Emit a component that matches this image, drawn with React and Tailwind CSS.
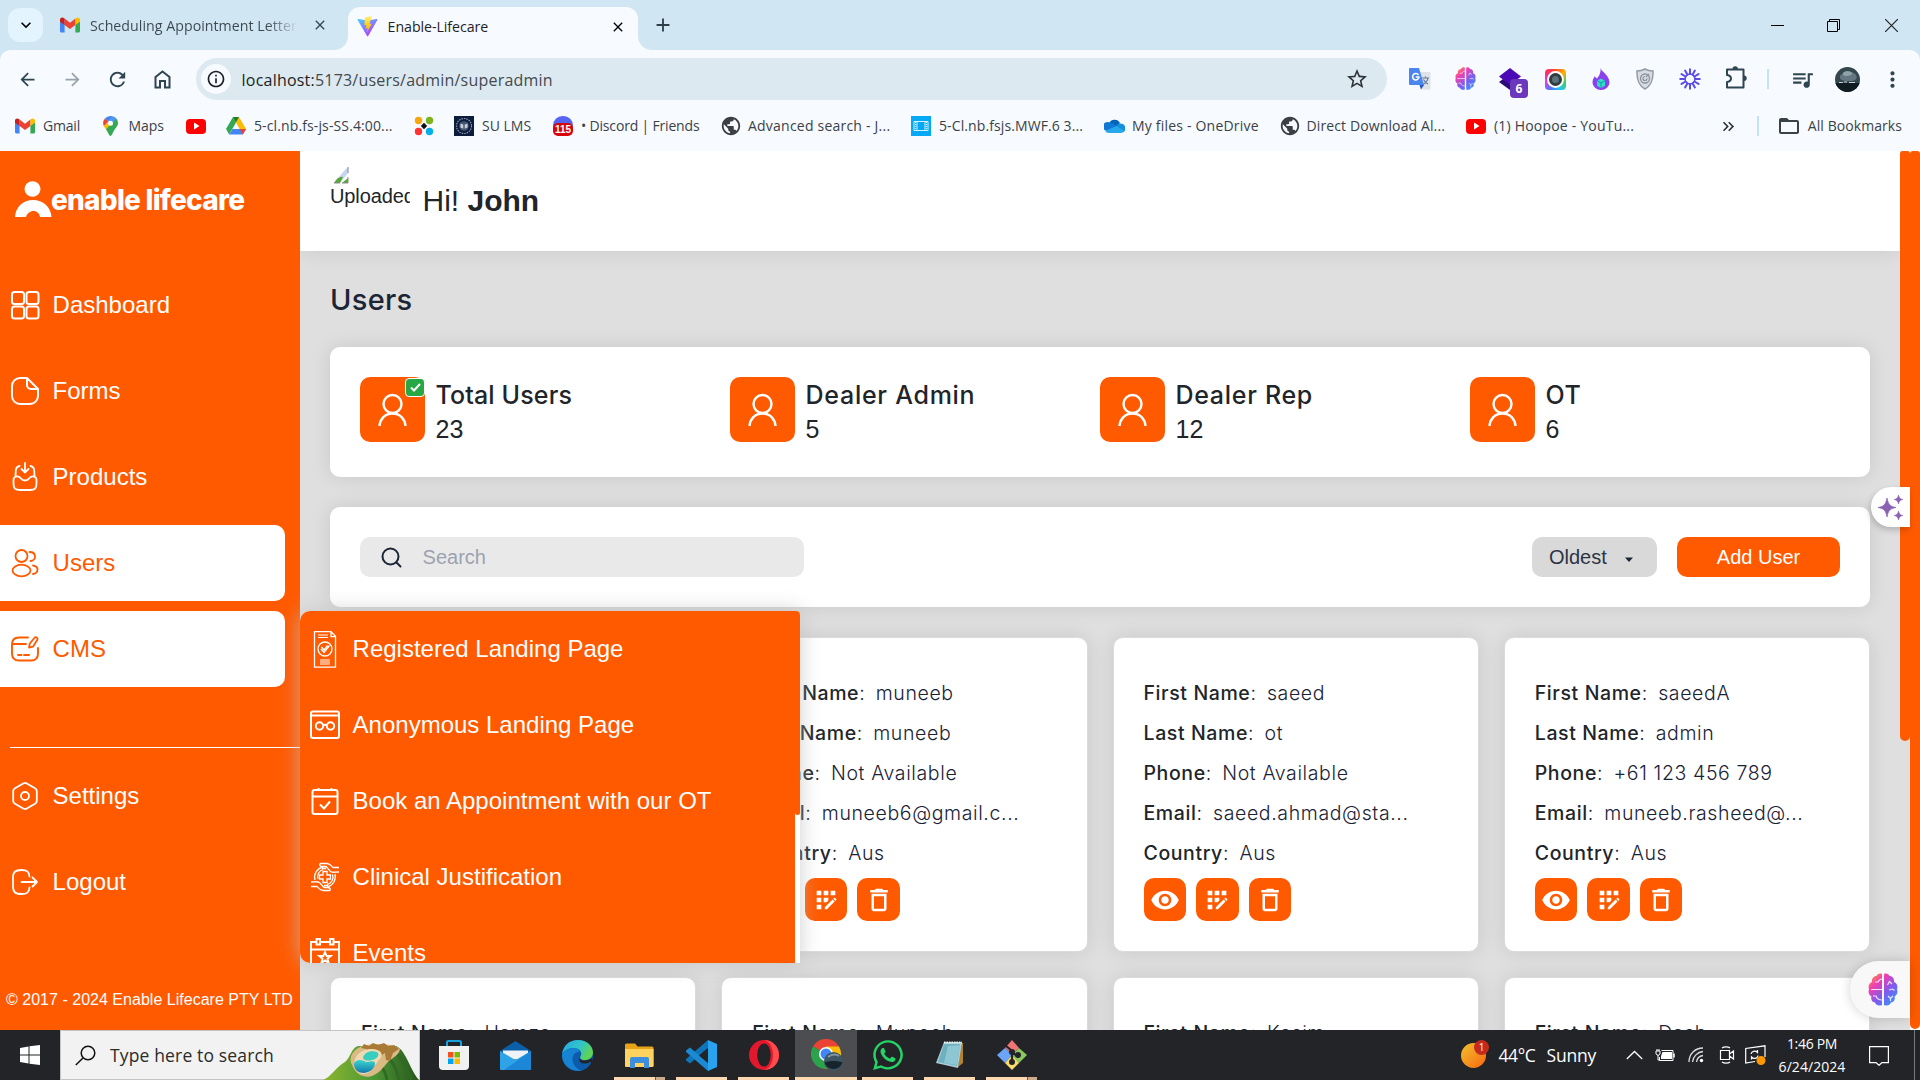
import React from "react";
import {
  MdQueueMusic, MdStarBorder, MdInfoOutline, MdPublic, MdFolderOpen,
  MdAppRegistration, MdRemoveRedEye, MdDeleteOutline, MdArrowBack, MdArrowForward, MdRefresh,
  MdAdd, MdClose, MdMoreVert, MdKeyboardDoubleArrowRight, MdKeyboardArrowDown, MdPlayArrow,
} from "react-icons/md";
import { FaWhatsapp } from "react-icons/fa";

const Svg = ({ w = 24, h, box, children, className = "" }) => (
  <svg width={w} height={h || w} viewBox={box || "0 0 24 24"} fill="none" className={"shrink-0 " + className}>
    {children}
  </svg>
);

/* ---------- brand marks ---------- */

const Gmail = () => (
  <Svg w={20} h={16} box="0 0 20 16">
    <path d="M0 3v11a1.6 1.6 0 0 0 1.6 1.6h3V7z" fill="#4285f4" />
    <path d="M20 3v11a1.6 1.6 0 0 1-1.6 1.6h-3V7z" fill="#34a853" />
    <path d="M4.6 1.6V8L10 12l5.400-4V1.600L10 5.700z" fill="#ea4335" />
    <path d="M0 2.600V4.700L4.600 8V1.500l-.8-.6C2.200-.3 0 .7 0 2.600z" fill="#c5221f" />
    <path d="M20 2.600V4.700L15.400 8V1.500l.8-.6C17.800-.3 20 .7 20 2.600z" fill="#fbbc04" />
  </Svg>
);

const Vite = () => (
  <Svg w={21} box="0 0 32 32">
    <defs>
      <linearGradient id="vt" x1="0" y1="0" x2="0.7" y2="1"><stop stopColor="#41d1ff" /><stop offset="1" stopColor="#bd34fe" /></linearGradient>
      <linearGradient id="vy" x1="0" y1="0" x2="0" y2="1"><stop stopColor="#ffea83" /><stop offset=".3" stopColor="#ffdd35" /><stop offset="1" stopColor="#ffa800" /></linearGradient>
    </defs>
    <path d="M31 6 17 30.500a1 1 0 0 1-1.700 0L1 6a1 1 0 0 1 1.100-1.500L16 7l14-2.500A1 1 0 0 1 31 6z" fill="url(#vt)" />
    <path d="M22.500 0 12 2.200l-.8 11.500 3 .2-1 5 3-.6-1.300 7.200 7.700-14-3.600.5z" fill="url(#vy)" />
  </Svg>
);

const Pin = () => (
  <Svg w={15} h={20} box="0 0 15 20">
    <path d="M7.500 0a7.300 7.300 0 0 0-5.600 2.600l3.400 3 5-5A7 7 0 0 0 7.500 0z" fill="#4285f4" />
    <path d="M1.900 2.600A7.300 7.300 0 0 0 .9 10.300L5.300 5.600z" fill="#ea4335" />
    <path d="M.9 10.300c.5 1.100 1.300 2 2 3l6.800-6L5.300 5.600z" fill="#fbbc04" />
    <path d="M2.900 13.300C5 16 6 20 7.500 20S9.700 16 12 13c2-2.600 3-4 3-5.700 0-2-.8-3.800-1.900-5z" fill="#34a853" />
    <path d="M10 .6 5.300 5.600l4.400 1.700 3.400-5A6 6 0 0 0 10 .6z" fill="#4f96f6" />
    <circle cx="7.500" cy="7.200" r="2.500" fill="#fff" />
  </Svg>
);

const YouTube = () => (
  <span className="flex h-[15px] w-[20px] shrink-0 items-center justify-center rounded-[4px] bg-[#f00]">
    <MdPlayArrow className="text-white" size={12} />
  </span>
);

const Drive = () => (
  <Svg w={20} h={18} box="0 0 20 18">
    <path d="M7 0h6l-3.200 5.700L3.200 17.500 0 12z" fill="#34a853" />
    <path d="M7 0h6l7 12h-6.300z" fill="#fbbc04" />
    <path d="M6.500 12H20l-3.200 5.600H3.200z" fill="#4285f4" />
    <path d="M13.600 12H20l-3.200 5.600z" fill="#ea4335" />
    <path d="M7 0h6l-3 5.200z" fill="#188038" />
  </Svg>
);

const Flower = () => (
  <Svg w={20} box="0 0 20 20">
    <circle cx="4.500" cy="4.500" r="3.700" fill="#f9a60a" /><circle cx="15.500" cy="4.500" r="3.700" fill="#7ab51d" />
    <circle cx="4.500" cy="15.500" r="3.700" fill="#f33" /><circle cx="15.500" cy="15.500" r="3.700" fill="#06aee6" />
    <path d="m10 6.800 3.200 3.200-3.200 3.200L6.800 10z" fill="#111" />
  </Svg>
);

const Crest = () => (
  <span className="flex h-[20px] w-[20px] shrink-0 items-center justify-center bg-[#0b1c3c]">
    <Svg w={18} box="0 0 18 18">
      <circle cx="9" cy="9" r="7.500" stroke="#8d99ad" strokeWidth="1.200" strokeDasharray="1.500 1" />
      <circle cx="9" cy="9" r="4.800" fill="#44546f" />
      <path d="M5.500 6.500 9 8l3.500-1.500v4L9 12l-3.500-1.500z" fill="#c8cfdb" /><path d="M9 8v4" stroke="#0b1c3c" />
    </Svg>
  </span>
);

const Discord = () => (
  <span className="relative block h-[20px] w-[20px] shrink-0">
    <span className="block h-[19px] w-[20px] rounded-full bg-[#5865f2]" />
    <span className="absolute bottom-0 left-0 h-[13px] w-[20px] rounded-[5px] bg-[#d8040b] text-center font-['Liberation_Sans'] text-[10px] leading-[13px] font-bold text-white">115</span>
  </span>
);

const Film = () => (
  <Svg w={20} box="0 0 20 20">
    <path d="M0 0h20v20H0z" fill="#03a9f4" />
    <path d="M3 5.500h14v9H3z" stroke="#d5f1fd" /><path d="M6 5v10M14 5v10" stroke="#d5f1fd" />
    <path d="M4.500 6v8M15.500 6v8" stroke="#d5f1fd" strokeDasharray="1 1" />
  </Svg>
);

const OneDrive = () => (
  <Svg w={21} h={14} box="0 0 21 14">
    <path d="M5 4.500A6 6 0 0 1 16 4l-5 6z" fill="#0364b8" />
    <path d="M.5 11A4.500 4.500 0 0 1 6.500 4c1 0 2 .4 3 1l5 3-9 5z" fill="#0f78d4" />
    <path d="M12.500 6.500A5 5 0 0 1 16.500 4.500a4.700 4.700 0 0 1 3 8.500L13 12z" fill="#1490df" />
    <path d="M1 12l11.500-5L20.500 12c-.8 1.200-2 2-3.600 2H5A5 5 0 0 1 1 12z" fill="#28a8ea" />
  </Svg>
);

const Brain = ({ size = 22, id }) => (
  <Svg w={size} h={size * 1.1} box="0 0 30 33">
    <defs>
      <linearGradient id={id} x1="0" y1="0" x2="30" y2="33" gradientUnits="userSpaceOnUse">
        <stop stopColor="#ffb020" /><stop offset=".3" stopColor="#f23fb0" /><stop offset=".6" stopColor="#7b5cf0" /><stop offset="1" stopColor="#23a6ff" />
      </linearGradient>
    </defs>
    <path d="M14 1v31c-3 1.200-6 .5-7-2.500-3 0-4.500-3-3.500-6C.5 22 0 19 1 16.500 0 13 1 10 4 9 3.500 5 6 3 8.500 3 10 .5 12 0 14 1zM16 1v31c3 1.200 6 .5 7-2.500 3 0 4.500-3 3.500-6C29.500 22 30 19 29 16.500 30 13 29 10 26 9 26.500 5 24 3 21.500 3 20 .5 18 0 16 1z" fill={"url(#" + id + ")"} />
    <path d="M14 6c-2 0-3 1-4 3H7M3 16.500h11M5 23h3c1 3 3 4 6 4M19.500 12l2-3.500L24 11M21 17l3.500-1 2 1.500M20 23l2.500 2.500L25 23M22.500 25.500V28" stroke="#fff" strokeOpacity=".85" strokeWidth="1.100" />
  </Svg>
);

/* ---------- browser chrome ---------- */

const TabStrip = () => (
  <div className="flex h-[50px] items-start bg-[#d0e6f3] pl-2 text-[14.200px] text-[#41484d]">
    <div className="mt-2 flex h-[34px] w-[35px] items-center justify-center rounded-[12px] bg-[#e3f4ff]">
      <MdKeyboardArrowDown size={20} className="text-black" />
    </div>
    <div className="flex h-[50px] w-[305px] items-center pl-[17px]">
      <Gmail />
      <span className="mt-px ml-[10px] w-[208px] overflow-hidden bg-gradient-to-r from-[#3c464c] from-85% to-[#d0e6f3] bg-clip-text tracking-[0.030px] whitespace-nowrap text-transparent">Scheduling Appointment Letter</span>
      <MdClose size={16} className="ml-[14px] text-[#33474f]" />
    </div>
    <div className="relative mt-[7px] flex h-[43px] w-[290px] items-center rounded-t-[12px] bg-[#f7faff] pr-[12px] pb-1 pl-[9px]">
      <Svg w={14} box="0 0 14 14" className="absolute bottom-0 -left-[14px]"><path d="M14 0v14H0A14 14 0 0 0 14 0z" fill="#f7faff" /></Svg>
      <Svg w={14} box="0 0 14 14" className="absolute -right-[14px] bottom-0"><path d="M0 0v14h14A14 14 0 0 1 0 0z" fill="#f7faff" /></Svg>
      <Vite />
      <span className="ml-[9.600px] tracking-[-0.060px] text-[#1f2426]">Enable-Lifecare</span>
      <MdClose size={16} className="ml-auto text-black" />
    </div>
    <MdAdd size={22} className="mt-[14px] ml-[14px] text-[#2d3f48]" />
    <div className="ml-auto flex h-[50px] items-center text-black">
      <Svg w={13} box="0 0 13 13" className="mr-[43px]"><path d="M0 6.500h13" stroke="#000" /></Svg>
      <Svg w={13} box="0 0 13 13" className="mr-[45px]"><path d="M.5 2.500h10v10H.5zM2.500 2.500V.5h10v10h-2" stroke="#000" /></Svg>
      <Svg w={13} box="0 0 13 13" className="mr-[22px]"><path d="m0 0 13 13M13 0 0 13" stroke="#222" strokeWidth="1.200" /></Svg>
    </div>
  </div>
);

const Puzzle = () => (
  <Svg w={22} h={25} box="0 0 22 25">
    <path d="M2 4.500h16.500v18H2v-5.500c3-.5 4-1.800 4-3.500S5 10.500 2 10z" stroke="#2f4552" strokeWidth="2" strokeLinejoin="round" />
    <path d="M7.500 4a2.700 2.700 0 0 1 5.400 0zM19 10.500a2.700 2.700 0 0 1 0 5.400z" fill="#2f4552" />
  </Svg>
);

const Extensions = () => (
  <div className="flex items-center">
    <div className="flex w-[45px] justify-center">
      <Svg w={22} box="0 0 22 22">
        <path d="M9 4h11.500a1 1 0 0 1 1 1v15.500a1 1 0 0 1-1 1H12z" fill="#dfe3e8" />
        <path d="M13 10h7M16.500 8.500V10M19 10c-.5 3-2.500 5-5 6.500M14.500 11.500c1 2 2.500 3.500 4.500 4.500" stroke="#5f7c9b" strokeWidth="1.200" />
        <path d="M1 0h9l5 17H1a1 1 0 0 1-1-1V1a1 1 0 0 1 1-1z" fill="#4a86ee" /><path d="M10.500 17H15l-3 4.500z" fill="#2a56c6" />
        <path d="M9.500 7A3.200 3.200 0 1 0 10 9H6.800" stroke="#fff" strokeWidth="1.500" />
      </Svg>
    </div>
    <div className="flex w-[46px] justify-center"><Brain id="bt" size={21} /></div>
    <div className="relative flex w-[45px] justify-center">
      <Svg w={23} box="0 0 23 23"><path d="m11 6 11 8-11 8L0 14z" fill="#2b0a73" /><path d="m11 0 11 8.500-11 8.500L0 8.500z" fill="#4b0ab5" /></Svg>
      <span className="absolute top-[11px] left-[22px] h-[19px] w-[18px] rounded-[4px] bg-[#6a37bd] text-center text-[12px] leading-[19px] font-bold text-white">6</span>
    </div>
    <div className="flex w-[45px] justify-center">
      <span className="flex h-[21px] w-[21px] items-center justify-center rounded-[4px] bg-[conic-gradient(#ff4b2b,#ffb300,#3ecf4c,#22c6f5,#4b7bff,#e63bf0,#ff2d6f,#ff4b2b)]">
        <span className="flex h-[17px] w-[17px] items-center justify-center rounded-full bg-white"><span className="h-[13px] w-[13px] rounded-full border-[3px] border-[#303a3f] bg-[#58717a]" /></span>
      </span>
    </div>
    <div className="flex w-[45px] justify-center">
      <Svg w={18} h={22} box="0 0 18 22">
        <path d="M8.500 0c1 4 9 7 9 14.500a8.500 7.500 0 0 1-17 0C.5 11 2 9.500 3 8c.5 1.500 1 2 2 2.500C7 8 9 5 8.500 0z" fill="#8a42ee" />
        <path d="m9 10.500 4 2.200v5L9 20l-4-2.300v-5z" fill="#35dcc5" /><path d="m5 12.700 4 2.200 4-2.200M9 15v5" stroke="#169bb5" />
      </Svg>
    </div>
    <div className="flex w-[44px] justify-center">
      <Svg w={18} h={22} box="0 0 18 22">
        <path d="M9 1c2.500 1.500 5 2 8 2 .3 8-1 14-8 18C2 17 .7 11 1 3c3 0 5.500-.5 8-2z" fill="#d8dce2" stroke="#9299a5" strokeWidth="1.500" />
        <circle cx="9" cy="10.500" r="4.500" stroke="#8b929e" strokeWidth="1.300" /><path d="M9 8.500a2 2 0 1 0 2 2M10 9l3-3" stroke="#8b929e" strokeWidth="1.200" />
      </Svg>
    </div>
    <div className="flex w-[45px] justify-center">
      <Svg w={22} box="0 0 22 22">
        {[0, 30, 60, 90, 120, 150, 180, 210, 240, 270, 300, 330].map((a) => (
          <path key={a} d="M11 6V1.200" stroke="#5b4be8" strokeWidth="2" strokeLinecap="round" transform={"rotate(" + a + " 11 11)"} />
        ))}
        <circle cx="11" cy="11" r="5" stroke="#5b4be8" strokeWidth="1.500" />
      </Svg>
    </div>
    <div className="flex w-[46px] justify-center pb-[3px] pl-[2px]"><Puzzle /></div>
  </div>
);

const Avatar = () => (
  <Svg w={25} box="0 0 25 25" className="ml-[20px]">
    <defs><clipPath id="av"><circle cx="12.500" cy="12.500" r="12.500" /></clipPath></defs>
    <g clipPath="url(#av)">
      <path d="M0 0h25v25H0z" fill="#34474f" />
      <path d="M5 9c3-5 12-6 16-1 2 4-1 6-6 6S4 14 5 9z" fill="#62777f" />
      <path d="M9 5c3-2 7-1 8 1s-3 3-6 3-4-2.500-2-4z" fill="#8ea2a8" />
      <path d="M0 16h25v9H0z" fill="#101c22" />
      <path d="M4 15.500h4M9 15h3M14 15.500h6" stroke="#c9d1d4" />
    </g>
  </Svg>
);

const Toolbar = () => (
  <div className="bg-[#d0e6f3]">
    <div className="flex h-[58px] items-center rounded-t-[10px] bg-[#f7faff] text-[#2f4552]">
      <MdArrowBack size={21} className="ml-[17px]" />
      <MdArrowForward size={21} className="ml-[24px] text-[#9aa3a9]" />
      <MdRefresh size={23} className="ml-[23px]" />
      <Svg w={17} h={19} box="0 0 17 19" className="ml-[25px]"><path d="M1.500 7 8.500 1.500l7 5.500v10.500h-4.500V11H6v6.500H1.500z" stroke="#2f4552" strokeWidth="2" /></Svg>
      <div className="ml-[25px] flex h-[42px] w-[1191px] items-center rounded-full bg-[#dde9f0] pr-[18px] pl-[5px]">
        <span className="flex h-[30px] w-[30px] items-center justify-center rounded-full bg-[#f7faff]"><MdInfoOutline size={20} className="text-[#1b2023]" /></span>
        <span className="mt-px ml-[10.600px] text-[16px] tracking-[0.210px] text-[#444a4e]"><span className="text-[#1b1f22]">localhost:</span>5173/users/admin/superadmin</span>
        <MdStarBorder size={24} className="ml-auto text-[#2c3338]" />
      </div>
      <div className="ml-[10px]"><Extensions /></div>
      <span className="ml-[9px] h-[20px] w-[2px] bg-[#c4e3f8]" />
      <MdQueueMusic size={25} className="ml-[21px]" />
      <Avatar />
      <MdMoreVert size={25} className="ml-[20px]" />
    </div>
  </div>
);

const Globe = () => <MdPublic size={22} className="-ml-[1.500px] shrink-0 text-[#3c4043]" />;

const Mark = ({ w, gap = "ml-[8px]", icon, children }) => (
  <div className={"flex shrink-0 items-center " + w}>
    {icon}
    <span className={"-mt-[2px] whitespace-nowrap " + gap}>{children}</span>
  </div>
);

const Bookmarks = () => (
  <div className="flex h-[43px] items-start bg-[#f7faff] pl-[15px] text-[14px] text-[#3a4247]">
    <div className="flex h-[36px] flex-1 items-center">
      <Mark w="w-[88px]" icon={<Gmail />}><span className="tracking-[-0.2px]">Gmail</span></Mark>
      <Mark w="w-[83px]" gap="ml-[10.600px]" icon={<Pin />}><span className="tracking-[-0.1px]">Maps</span></Mark>
      <Mark w="w-[40px]" icon={<YouTube />} />
      <Mark w="w-[188px]" icon={<Drive />}><span className="tracking-[0.12px]">5-cl.nb.fs-js-SS.4:00...</span></Mark>
      <Mark w="w-[40px]" icon={<Flower />} />
      <Mark w="w-[99px]" icon={<Crest />}>SU LMS</Mark>
      <Mark w="w-[168px]" icon={<Discord />}><span className="tracking-[-0.18px]">• Discord | Friends</span></Mark>
      <Mark w="w-[190px]" gap="ml-[6.500px]" icon={<Globe />}><span className="tracking-[0.22px]">Advanced search - J...</span></Mark>
      <Mark w="w-[193px]" icon={<Film />}><span className="tracking-[0.1px]">5-Cl.nb.fsjs.MWF.6 3...</span></Mark>
      <Mark w="w-[176px]" gap="ml-[7px]" icon={<OneDrive />}><span className="tracking-[0.2px]">My files - OneDrive</span></Mark>
      <Mark w="w-[186px]" gap="ml-[6px]" icon={<Globe />}><span className="tracking-[0.12px]">Direct Download Al...</span></Mark>
      <Mark w="w-[180px]" icon={<YouTube />}><span className="tracking-[0.2px]">(1) Hoopoe - YouTu...</span></Mark>
    </div>
    <div className="flex h-[36px] items-center">
      <MdKeyboardDoubleArrowRight size={19} className="text-[#2b3236]" />
      <span className="ml-[19px] h-[20px] w-[2px] bg-[#c4e3f8]" />
      <MdFolderOpen size={24} className="ml-[18px]" />
      <span className="-mt-[2px] mr-[18px] ml-[7px] tracking-[0.070px] whitespace-nowrap">All Bookmarks</span>
    </div>
  </div>
);

/* ---------- sidebar ---------- */

const DashIcon = () => (
  <Svg w={30} h={30} box="0 0 30 30">
    <g stroke="currentColor" strokeWidth="2"><rect x="2" y="2" width="12" height="12" rx="2.500" /><rect x="16.500" y="2" width="12" height="12" rx="2.500" /><rect x="2" y="16.500" width="12" height="12" rx="2.500" /><rect x="16.500" y="16.500" width="12" height="12" rx="2.500" /></g>
  </Svg>
);
const FormIcon = () => (
  <Svg w={30} box="0 0 30 30">
    <path d="M17 2h-7a8 8 0 0 0-8 8v10a8 8 0 0 0 8 8h10a8 8 0 0 0 8-8v-7zM17 2v7a4 4 0 0 0 4 4h7" stroke="currentColor" strokeWidth="2" strokeLinejoin="round" />
  </Svg>
);
const ProductIcon = () => (
  <Svg w={30} box="0 0 30 30">
    <path d="M15 1v9M11.500 7l3.500 3.500L18.500 7M9.500 4C7 4.500 6 5.500 5.800 8.500L5.500 14M20.500 4c2.500.5 3.500 1.500 3.700 4.500l.3 5.500M3.500 18c0-3 1.500-3.700 4-3.700 2 0 2.500.7 3.500 2.200s1.800 2 4 2 3-.5 4-2 1.500-2.200 3.500-2.200c2.500 0 4 .7 4 3.700v3.500c0 5-1.500 6.500-6.500 6.500h-10c-5 0-6.500-1.500-6.500-6.500z" stroke="currentColor" strokeWidth="1.800" strokeLinecap="round" />
  </Svg>
);
const UsersIcon = () => (
  <Svg w={30} box="0 0 30 30">
    <g stroke="currentColor" strokeWidth="1.800" strokeLinecap="round"><circle cx="11.500" cy="8" r="6" /><ellipse cx="11.500" cy="22.500" rx="9" ry="5.800" /><path d="M19.500 4c3.500 0 5.500 2 5.500 4.500S23 13 20.500 13M23 17.500c3 .5 4.500 2 4.500 4s-1.500 4-4.500 4.500" /></g>
  </Svg>
);
const CmsIcon = () => (
  <Svg w={30} box="0 0 30 30">
    <path d="M18 3.500H9c-5 0-7 2-7 7v9c0 5 2 7 7 7h12c5 0 7-2 7-7V14M2 10h14M8 21h3.500M14 21h5" stroke="currentColor" strokeWidth="1.900" strokeLinecap="round" />
    <path d="m19 13.500.8-4 5-6c1-1 3.200.3 2.700 2l-4.500 7.200z" stroke="currentColor" strokeWidth="1.800" strokeLinejoin="round" />
  </Svg>
);
const SettingsIcon = () => (
  <Svg w={30} box="0 0 30 30">
    <path d="M13.200 2.500 5 7.200A3.500 3.500 0 0 0 3.200 10.300v9.400A3.500 3.500 0 0 0 5 22.800l8.200 4.700a3.500 3.500 0 0 0 3.600 0l8.200-4.700a3.500 3.500 0 0 0 1.800-3.100v-9.400A3.500 3.500 0 0 0 25 7.200l-8.200-4.700a3.500 3.500 0 0 0-3.600 0z" stroke="currentColor" strokeWidth="1.800" />
    <circle cx="15" cy="15" r="4" stroke="currentColor" strokeWidth="1.800" />
  </Svg>
);
const LogoutIcon = () => (
  <Svg w={30} box="0 0 30 30">
    <path d="M19.500 9.500C19 4.500 17 3 11.500 3 5 3 3 5 3 11v8c0 6 2 8 8.500 8 5.500 0 7.500-1.500 8-6.500M11.500 15H27M22.500 10.500 27 15l-4.500 4.500" stroke="currentColor" strokeWidth="1.800" strokeLinecap="round" strokeLinejoin="round" />
  </Svg>
);

const NavItem = ({ icon, label, active }) => (
  <div className={active ? "flex h-[76px] w-[285px] items-center rounded-r-[10px] bg-white pl-[10px] text-[#ff5a00]" : "flex h-[76px] w-[285px] items-center pl-[10px] text-white"}>
    {icon}
    <span className="ml-[12.600px] text-[24px]">{label}</span>
  </div>
);

const Sidebar = () => (
  <aside className="flex h-full w-[300px] shrink-0 flex-col bg-[#ff5a00] font-['Liberation_Sans',sans-serif]">
    <div className="flex h-[100px] items-center pb-[4px] pl-[15px]">
      <Svg w={37} h={37} box="0 0 37 37"><ellipse cx="17.500" cy="8" rx="8" ry="7.800" fill="#fff" /><path d="M0 36c.5-10 8-17 18-17s18 7 18.500 17H25c-.5-3.500-3-6-6.500-6S12 32.500 11 36z" fill="#fff" /></Svg>
      <span className="mt-[2px] -ml-[1px] font-['Inter',sans-serif] text-[28px] font-extrabold tracking-[-0.760px] whitespace-nowrap text-white">enable lifecare</span>
    </div>
    <nav className="mt-[16px] flex flex-col gap-[10px]">
      <NavItem icon={<DashIcon />} label="Dashboard" />
      <NavItem icon={<FormIcon />} label="Forms" />
      <NavItem icon={<ProductIcon />} label="Products" />
      <NavItem icon={<UsersIcon />} label="Users" active />
      <NavItem icon={<CmsIcon />} label="CMS" active />
    </nav>
    <div className="mt-[60px] ml-[10px] h-px shrink-0 bg-white" />
    <div className="mt-[10px] flex flex-col gap-[10px]">
      <NavItem icon={<SettingsIcon />} label="Settings" />
      <NavItem icon={<LogoutIcon />} label="Logout" />
    </div>
    <div className="mt-auto mb-[20px] pl-[6px] text-[16px] leading-[20px] tracking-[0.020px] whitespace-nowrap text-white">© 2017 - 2024 Enable Lifecare PTY LTD</div>
  </aside>
);

/* ---------- CMS submenu ---------- */

const LicenceIcon = () => (
  <Svg w={30} h={37} box="0 0 30 37">
    <g stroke="#fff" strokeWidth="1.300"><path d="M4.500.7h16.500l4.500 4.500v31h-21zM21 .7v5h4.500" /><path d="M8 4h10M8 6.500h10M10 29h10M10 31h10M10 33h10" strokeWidth="1" /><circle cx="15" cy="18" r="7" /><path d="m11 18 3 3.500 5.500-7M11.500 16l2.500 3 3.500-4.500" /></g>
  </Svg>
);
const AnonIcon = () => (
  <Svg w={30} box="0 0 30 30">
    <g stroke="#fff" strokeWidth="2"><rect x="1" y="1.500" width="28" height="26.500" rx="2" /><path d="M1 5.500h28M13 15.500c1.300-1 2.700-1 4 0" /><circle cx="9.500" cy="16" r="3.700" /><circle cx="20.500" cy="16" r="3.700" /></g>
  </Svg>
);
const BookIcon = () => (
  <Svg w={30} box="0 0 30 30">
    <g stroke="#fff" strokeWidth="2"><rect x="2.500" y="4" width="25" height="24" rx="2" /><path d="M2.500 10.500h25M8.500 2v3M21.500 2v3M10 18.500l4 4 6-7" /></g>
  </Svg>
);
const ClinicalIcon = () => (
  <Svg w={30} box="0 0 30 30">
    <g stroke="#fff" strokeWidth="1.300"><path d="M13 9.500h4V13h3.500v4H17v3.500h-4V17H9.500v-4H13z" /><path d="M5 18A10.500 10.500 0 0 1 13 5M25 12a10.500 10.500 0 0 1-8 13M8 17a7.500 7.500 0 0 1 5-9.500M22.500 12.500A7.500 7.500 0 0 1 17 22.500" /><path d="M10 1.500h7c3 0 5 3 6 4h6M10 1.500c-1 2 .5 3 2.500 3H16l4.500 5c2 1.500 4 .5 8.500.5M12 6.500h4M20 28.500h-7c-3 0-5-3-6-4H1M20 28.500c1-2-.5-3-2.500-3H14l-4.500-5C7.500 19 5.500 20 1 20M18 23.500h-4" /></g>
  </Svg>
);
const EventsIcon = () => (
  <Svg w={30} box="0 0 30 30">
    <g stroke="#fff" strokeWidth="1.900"><path d="M6 4H1v25h28V4h-5M10.500 4h9M1 11.500h28" /><path d="M6.500 1h3.500v5.500H6.500zM20 1h3.500v5.500H20z" /><path d="m15 14 1.700 4h4l-3.200 2.700 1.200 4.300-3.700-2.500-3.700 2.500 1.200-4.300L9.300 18h4z" /></g>
  </Svg>
);

const MenuItem = ({ icon, label }) => (
  <div className="flex h-[76px] shrink-0 items-center pl-[10px] text-white">
    {icon}
    <span className="ml-[12.600px] text-[24px] whitespace-nowrap">{label}</span>
  </div>
);

const CmsMenu = () => (
  <div className="absolute top-[460px] left-[300px] z-20 flex h-[352px] w-[500px] overflow-hidden rounded-l-[10px] rounded-tr-[4px] bg-white font-['Liberation_Sans',sans-serif] shadow-[0_0_20px_rgba(190,190,190,0.75)]">
    <div className="flex w-[495px] flex-col bg-[#ff5a00]">
      <MenuItem icon={<LicenceIcon />} label="Registered Landing Page" />
      <MenuItem icon={<AnonIcon />} label="Anonymous Landing Page" />
      <MenuItem icon={<BookIcon />} label="Book an Appointment with our OT" />
      <MenuItem icon={<ClinicalIcon />} label="Clinical Justification" />
      <MenuItem icon={<EventsIcon />} label="Events" />
    </div>
    <div className="h-[204px] w-[5px] rounded-b-[3px] bg-[#ff5a00]" />
  </div>
);

/* ---------- content ---------- */

const Person = () => (
  <Svg w={30} h={34} box="0 0 30 34"><circle cx="14.500" cy="11" r="9" stroke="#fff" strokeWidth="2.400" /><path d="M1.500 33c.5-7 5.500-12.500 13-12.500S27 26 27.500 33" stroke="#fff" strokeWidth="2.400" /></Svg>
);

const Stat = ({ label, value, checked, track }) => (
  <div className="flex">
    <div className="relative flex h-[65px] w-[65px] items-center justify-center rounded-[10px] bg-[#ff5a00]">
      <Person />
      {checked && (
        <span className="absolute top-px right-0 flex h-[19px] w-[20px] items-center justify-center rounded-[4px] border border-white bg-[#28a745]">
          <Svg w={11} h={9} box="0 0 11 9"><path d="m1 4.500 3 3L10 1" stroke="#fff" strokeWidth="2" /></Svg>
        </span>
      )}
    </div>
    <div className="ml-[10.500px] text-[25px] leading-[34px] text-[#212529]">
      <div className={"pt-px font-['Inter',sans-serif] leading-[34px] font-medium whitespace-nowrap " + track}>{label}</div>
      <div className="font-['Liberation_Sans',sans-serif] leading-[34px]">{value}</div>
    </div>
  </div>
);

const Field = ({ name, value }) => (
  <div className="flex h-[40px] items-center pt-[2px] whitespace-nowrap">
    <span><span className="font-medium tracking-[0.600px] text-[#212529]">{name}</span><span className="font-light">:</span></span>
    <span className="ml-[11px] font-light tracking-[0.620px]">{value}</span>
  </div>
);

const Action = ({ children }) => (
  <span className="flex h-[43px] w-[42.500px] items-center justify-center rounded-[10px] bg-[#ff5a00] text-white">{children}</span>
);

const panel = "bg-white shadow-[0_0_20px_rgba(0,0,0,0.1)]";

const labels = ["First Name", "Last Name", "Phone", "Email", "Country"];

const UserCard = ({ values }) => (
  <div className={"h-[315px] rounded-[10px] border border-[#dbdbdb] px-[30px] pt-[35px] font-['Inter',sans-serif] text-[19.500px] text-[#1a2236] " + panel}>
    {values.map((v, i) => <Field key={i} name={labels[i]} value={v} />)}
    {values.length === 5 && (
      <div className="mt-[5px] flex gap-[10px]">
        <Action><MdRemoveRedEye size={30} /></Action>
        <Action><MdAppRegistration size={28} /></Action>
        <Action><MdDeleteOutline size={30} /></Action>
      </div>
    )}
  </div>
);

const users = [
  [],
  ["muneeb", "muneeb", "Not Available", "muneeb6@gmail.c...", "Aus"],
  ["saeed", "ot", "Not Available", "saeed.ahmad@sta...", "Aus"],
  ["saeedA", "admin", "+61 123 456 789", "muneeb.rasheed@...", "Aus"],
  ["Hamza"],
  ["Muneeb"],
  ["Kasim"],
  ["Dash"],
];

const BrokenImage = () => (
  <Svg w={20} box="0 0 20 20">
    <path d="M4 18 14 6l4-4v6l-8 10z" fill="#c5d6f5" /><path d="M4 18c3-5 6-7 9-6l-3 6z" fill="#56a83a" /><path d="M12 18l6-5v5z" fill="#56a83a" /><path d="M18 2v6M18 12v6h-6M4 18h6" stroke="#8b8b8b" />
  </Svg>
);

const Content = () => (
  <main className="flex h-full w-[1600px] shrink-0 flex-col overflow-hidden bg-[#dfdfdf]">
    <header className="z-10 flex h-[100px] shrink-0 bg-white pl-[30px] font-['Liberation_Sans',sans-serif] text-[#212529] shadow-[0_0_20px_rgba(0,0,0,0.1)]">
      <div className="mt-[14px] w-[80px] overflow-hidden">
        <BrokenImage />
        <div className="text-[20px] leading-[23px] tracking-[-0.1px]">Uploaded</div>
      </div>
      <div className="mt-[32px] ml-[12.500px] text-[30px] leading-[36px]">Hi! <b>John</b></div>
    </header>
    <div className="px-[30px]">
      <h1 className="mt-[31px] h-[65px] font-['Inter',sans-serif] text-[29px] leading-[36px] font-medium tracking-[0.300px] text-[#1c2536]">Users</h1>
      <section className={"grid h-[130px] grid-cols-4 rounded-[10px] p-[30px] " + panel}>
        <Stat label="Total Users" value="23" checked track="tracking-[0.140px]" />
        <Stat label="Dealer Admin" value="5" track="tracking-[0.740px]" />
        <Stat label="Dealer Rep" value="12" track="tracking-[0.700px]" />
        <Stat label="OT" value="6" track="tracking-[0.700px]" />
      </section>
      <section className={"mt-[30px] flex h-[100px] items-center rounded-[10px] px-[30px] font-['Liberation_Sans',sans-serif] text-[20px] " + panel}>
        <div className="flex h-[40px] w-[444px] items-center rounded-[10px] bg-[#e9e9e9] pl-[21px] text-[#9ca3af]">
          <Svg w={21} box="0 0 21 21"><circle cx="9.500" cy="9.500" r="8" stroke="#1c2536" strokeWidth="2" /><path d="m15.500 15.500 4 4" stroke="#1c2536" strokeWidth="2" strokeLinecap="round" /></Svg>
          <span className="ml-[20.600px]">Search</span>
        </div>
        <div className="ml-auto flex h-[40px] w-[125px] items-center rounded-[10px] bg-[#d9d9d9] pl-[17px] text-[#2c3444]">
          Oldest
          <Svg w={8} h={5} box="0 0 8 5" className="mt-[5px] ml-[18px]"><path d="M0 .5h8L4 5z" fill="#1c2536" /></Svg>
        </div>
        <div className="ml-[20px] flex h-[40px] w-[163px] items-center justify-center rounded-[10px] bg-[#ff5a00] text-white">Add User</div>
      </section>
      <section className="mt-[30px] grid grid-cols-4 gap-[25px]">
        {users.map((u, i) => <UserCard key={i} values={u} />)}
      </section>
    </div>
  </main>
);

const Page = () => (
  <div className="relative flex h-[879px] overflow-hidden">
    <Sidebar />
    <Content />
    <div className="w-[10px] bg-[#dfdfdf]"><div className="h-[590px] rounded-t-[3px] rounded-b-[5px] bg-[#ff5a00]" /></div>
    <div className="w-[10px] bg-white"><div className="h-[878px] rounded-t-[3px] rounded-b-[5px] bg-[#ff5a00]" /></div>
    <CmsMenu />
    <div className="absolute top-[336px] right-[10px] z-20 flex h-[40px] w-[39px] items-center rounded-l-full bg-white pl-[7px] shadow-[-1px_3px_6px_rgba(0,0,0,0.2)]">
      <Svg w={25} box="0 0 25 25"><path d="M9 3c1.300 6.500 3 8.500 9 9.500-6 1-7.700 3-9 9.500C7.700 15.500 6 13.500 0 12.500 6 11.500 7.700 9.500 9 3zM20.500.2c.7 2.900 1.500 3.800 4.200 4.300-2.700.5-3.500 1.400-4.200 4.300-.7-2.900-1.500-3.800-4.200-4.300 2.700-.5 3.500-1.400 4.200-4.300zM20.500 16.200c.7 2.900 1.500 3.800 4.200 4.300-2.700.5-3.500 1.400-4.200 4.300-.7-2.900-1.500-3.800-4.200-4.300 2.700-.5 3.500-1.400 4.200-4.300z" fill="#8b62b3" stroke="#8b62b3" strokeWidth=".7" strokeLinejoin="round" /></Svg>
    </div>
    <div className="absolute top-[810px] right-[10px] z-20 flex h-[57px] w-[60px] items-center rounded-l-full bg-[#f8f8f8] pl-[18px] shadow-[0_0_12px_rgba(0,0,0,0.18)]">
      <Brain id="bf" size={30} />
    </div>
  </div>
);

/* ---------- taskbar ---------- */

const Tile = ({ children, line, split, on }) => (
  <div className={on ? "flex h-[50px] w-[62px] flex-col items-center bg-[#4c4d50]" : "flex h-[50px] w-[62px] flex-col items-center"}>
    <div className="flex h-[47px] items-center pt-[3px]">{children}</div>
    {line && (
      <div className={on ? "flex h-[3px] w-full" : "flex h-[3px] w-[51px]"}>
        <span className="flex-1 bg-[#ffd7b0]" />
        {split && <span className="w-[10px] border-l border-[#6b5b4d] bg-[#cbab8c]" />}
      </div>
    )}
  </div>
);

const Pools = () => (
  <Svg w={96} h={49} box="0 0 96 49" className="ml-auto">
    <defs>
      <linearGradient id="gr" x1="0" x2="1"><stop stopColor="#8db52f" /><stop offset=".5" stopColor="#4f9a35" /><stop offset="1" stopColor="#28561d" /></linearGradient>
      <linearGradient id="pl" x1="0" x2="0" y2="1"><stop stopColor="#38d6cf" /><stop offset="1" stopColor="#1478ad" /></linearGradient>
    </defs>
    <path d="M0 49c8-3 13-13 22-18 6-5 6-14 13-16h38c10 4 14 24 23 34z" fill="url(#gr)" />
    <path d="M64 26c8 6 10 16 12 23M72 20c8 8 12 20 17 29M57 34c4 4 6 9 7 15" stroke="#2f6b25" strokeWidth="3" />
    <path d="M29 34C24 24 34 15 44 14c10-2 28-1 33 4-1 7-9 9-13 14-7 9-14 16-24 13-6-2-9-6-11-11z" fill="#d9ba85" />
    <path d="M38 17l3-4 5 2 4-3 5 2 6-2 4 3 6-1 5 4-6 4-3 8-4-1-1-7-6 4-2-5-7 1-4-4z" fill="#a97936" />
    <path d="M32 33C30 26 38 17 50 18c9 1 11 6 6 11-7 9-9 15-17 14-5-1-6-5-7-10z" fill="#eed9b2" />
    <path d="M40 27c1-6 8-8 14-6 3 2 1 7-5 8-3 1-8 1-9-2z" fill="#37cdbf" />
    <path d="M31 34c0-5 6-6 10-4 4 3 9-2 11 2 0 5-4 9-11 10-6 0-9-3-10-8z" fill="url(#pl)" />
  </Svg>
);

const Taskbar = () => (
  <footer className="flex h-[50px] bg-[#222428] text-white">
    <div className="flex w-[60px] items-center justify-center">
      <Svg w={20} box="0 0 20 20"><path d="M0 3 8.500 1.500v8H0zM9.500 1.300 20 0v9.500H9.500zM0 10.500h8.500v8L0 17zM9.500 10.500H20V20L9.500 18.700z" fill="#fff" /></Svg>
    </div>
    <div className="flex w-[360px] items-center border border-[#c4c4c4] bg-[#f2f2f2] text-[#2b2b2b]">
      <Svg w={21} box="0 0 21 21" className="ml-[14px]"><circle cx="13" cy="8" r="6.800" stroke="#111" strokeWidth="1.500" /><path d="M8 13 .8 20" stroke="#111" strokeWidth="1.500" /></Svg>
      <span className="ml-[14px] text-[17.500px] tracking-[0.150px] whitespace-nowrap">Type here to search</span>
      <Pools />
    </div>
    <div className="ml-[2.500px] flex">
      <Tile>
        <Svg w={30} box="0 0 30 30"><path d="M8 8V2.500A1.500 1.500 0 0 1 9.500 1h11A1.500 1.500 0 0 1 22 2.500V8" stroke="#1ba1e2" strokeWidth="2" /><path d="M0 6h30v20a4 4 0 0 1-4 4H4a4 4 0 0 1-4-4z" fill="#f1f1f1" /><path d="M9 12h5.500v5.500H9z" fill="#f25022" /><path d="M15.500 12H21v5.500h-5.500z" fill="#7fba00" /><path d="M9 18.500h5.500V24H9z" fill="#00a4ef" /><path d="M15.500 18.500H21V24h-5.500z" fill="#ffb900" /></Svg>
      </Tile>
      <Tile>
        <Svg w={31} h={29} box="0 0 31 29"><path d="M0 10 15.500 0 31 10v5H0z" fill="#0b5ea8" /><path d="M3 9.500h25v9H3z" fill="#eef3f8" /><path d="M0 10l15.500 9L31 10v18a1 1 0 0 1-1 1H1a1 1 0 0 1-1-1z" fill="#2ea3e8" /><path d="M31 10v18a1 1 0 0 1-1 1H4z" fill="#1c87d6" /></Svg>
      </Tile>
      <Tile>
        <Svg w={31} box="0 0 31 31">
          <defs><linearGradient id="eg" x1="0" x2="1" y2=".4"><stop stopColor="#2aa5e0" /><stop offset=".6" stopColor="#2fc5c9" /><stop offset="1" stopColor="#60d354" /></linearGradient></defs>
          <circle cx="15.500" cy="15.500" r="15.500" fill="#0d5cab" />
          <path d="M0 15C1 5 8 0 16 0c9 0 15 6 15 12.500 0 5-4 7.500-8 7.500-4.500 0-5.500-2-4.500-3.500C21 12 17 8 12 8 6 8 1 11 0 15z" fill="url(#eg)" />
          <path d="M0 15c1-4 6-7 12-7 3 0 5 2 6 4-4-1-8 3-7.500 8 .4 5 4.500 9.500 9.500 10.500C8 32.500 0 24 0 15z" fill="#1683d3" />
          <path d="M18 16.500c-1 2 .5 4 5 4 3 0 5-1 7-2.500L31 24 28 22c-7 4-13 0-10-5.500z" fill="#222428" />
        </Svg>
      </Tile>
      <Tile line split>
        <Svg w={29} h={25} box="0 0 29 25"><path d="M0 2a1.500 1.500 0 0 1 1.500-1.500H10l2.500 3H27a1.500 1.500 0 0 1 1.500 1.500v18H0z" fill="#e8a317" /><path d="M0 6h28.500v17a1 1 0 0 1-1 1H1a1 1 0 0 1-1-1z" fill="#ffd35e" /><path d="M5 25v-9a2 2 0 0 1 2-2h15a2 2 0 0 1 2 2v9h-5v-5h-9v5z" fill="#3b8fdc" /></Svg>
      </Tile>
      <Tile line>
        <Svg w={31} box="0 0 31 31"><path d="M22 0 31 4v23l-9 4z" fill="#29a3ef" /><path d="M22 0v8L4 23.500 0 20.500 0 19z" fill="#0f74b8" /><path d="M22 31v-8L4 7.500 0 10.500V12z" fill="#1a8ad4" /><path d="M22 8v15l-9-7.500z" fill="#222428" /></Svg>
      </Tile>
      <Tile line>
        <Svg w={30} box="0 0 30 30"><ellipse cx="15" cy="15" rx="15" ry="15" fill="#e3182d" /><path d="M15 0c8 0 15 6 15 15s-7 15-15 15c7-2 9-9 9-15s-2-13-9-15z" fill="#ff4b4b" /><ellipse cx="15" cy="15" rx="6.800" ry="11.500" fill="#222428" /></Svg>
      </Tile>
      <Tile line on>
        <Svg w={32} h={32} box="0 0 32 32" className="ml-[2px]">
          <path d="M15 15 2 7.500A15 15 0 0 1 28 7.500z" fill="#ea4335" /><path d="M15 15 2 7.500A15 15 0 0 0 15 30l7-11z" fill="#2ba24c" /><path d="M15 15l7 4-7 11A15 15 0 0 0 28 7.500H15z" fill="#fbbc05" />
          <circle cx="15" cy="15" r="7" fill="#fff" /><circle cx="15" cy="15" r="5.500" fill="#4285f4" />
          <circle cx="22.500" cy="22.500" r="9.500" fill="#3e5563" /><path d="M13.500 23.500c5-2 13-2 18 0a9.500 9.500 0 0 1-18 0z" fill="#16242d" /><path d="M17 18c4-3 8-3 11-1" stroke="#7f98a3" strokeWidth="2" />
        </Svg>
      </Tile>
      <Tile line><FaWhatsapp size={34} className="text-[#25d366]" /></Tile>
      <Tile line>
        <Svg w={28} box="0 0 28 28"><path d="M24 2h3v20l-5 4z" fill="#b5812f" /><path d="M8 1h18l-4 26L0 22z" fill="#a9cdd6" /><path d="M8 3h16l-3 22L2 21z" fill="#6fb0bf" /><path d="M12 5 24 4l-3 20-13-2z" fill="#8cc7d3" /><path d="M8 1.500h18" stroke="#eee" strokeWidth="2" strokeDasharray="1.500 1" /></Svg>
      </Tile>
      <Tile line split>
        <Svg w={32} box="0 0 32 32"><path d="m16 1 7 8-7 7-7-7z" fill="#f27575" /><path d="m1 16 8-7 7 7-7 8z" fill="#6aa5f8" /><path d="m31 16-8-7-7 7 7 8z" fill="#8bc860" /><path d="m16 31 7-7-7-8-7 8z" fill="#fbdc6a" /><path d="M9 6 16 12v12M16 14l6 3" stroke="#222428" strokeWidth="2.200" /><circle cx="16" cy="13" r="3" fill="#222428" /><circle cx="22" cy="16" r="3" fill="#222428" /><circle cx="16" cy="23" r="3" fill="#222428" /></Svg>
      </Tile>
    </div>
    <div className="ml-auto flex items-center text-[17.500px]">
      <span className="relative h-[25px] w-[25px] rounded-full bg-gradient-to-br from-[#eec02e] to-[#f7630c]">
        <span className="absolute -top-[3px] left-[13px] h-[15px] w-[15px] rounded-full bg-[#c42b1c] text-center text-[10px] leading-[15px]">1</span>
      </span>
      <span className="ml-[12.500px] w-[48px] tracking-[-0.4px]">44°C</span>
      <span className="w-[79.500px] tracking-[-0.2px]">Sunny</span>
      <Svg w={17} h={10} box="0 0 17 10" className="mr-[12px]"><path d="m.8 9 7.700-7.500L16.200 9" stroke="#fff" strokeWidth="1.300" /></Svg>
      <Svg w={20} h={14} box="0 0 20 14" className="mr-[13px]"><path d="M1 3h4v3L3 7.500 1 6zM2 1v2M4 1v2M3 7v5h2" stroke="#fff" /><path d="M6.500 2.500H18v10H4.500V9" stroke="#fff" /><path d="M7.500 4H17v7H6V8z" fill="#fff" /><path d="M19 5.500v4" stroke="#fff" strokeWidth="1.500" /></Svg>
      <Svg w={16} box="0 0 16 16" className="mr-[15px]"><path d="M1 15C1 7 7 1 15 1M4.500 15C5 9.500 9.500 5 15 4.500M8.500 15c.5-3.500 3-6 6.500-6.500" stroke="#ddd" strokeWidth="1.300" /><circle cx="13.500" cy="13.500" r="1.700" fill="#fff" /></Svg>
      <Svg w={16} h={18} box="0 0 16 18" className="mr-[10px]"><path d="M1.500 4.500h9v9h-9zM10.500 8 14.500 5v8l-4-3M3 2c2-1.500 6-1.500 8 0M3 16c2 1.500 6 1.500 8 0" stroke="#fff" strokeWidth="1.200" /></Svg>
      <Svg w={21} h={20} box="0 0 21 20" className="mr-[10px]"><path d="M10 16.500.7 18V3.500L20 .8V12" stroke="#fff" strokeWidth="1.200" /><path d="M6 9c.5-2.500 4-4 6.500-1.500V5M13 10.500c-.5 3-4 4-6.500 1.500v2.500" stroke="#fff" strokeWidth="1.200" /><circle cx="16" cy="15.500" r="4.500" fill="#ff9800" /></Svg>
      <div className="w-[72px] text-center text-[14px] leading-[23px] tracking-[0.050px]"><span className="tracking-[-0.300px]">1:46 PM</span><br />6/24/2024</div>
      <Svg w={20} h={20} box="0 0 20 20" className="mt-[2px] ml-[21px]"><path d="M.6.600h18.800v16H13L10 19.300 7 16.600H.6z" stroke="#fff" strokeWidth="1.200" /></Svg>
      <span className="mr-[5px] ml-[25px] h-[50px] w-px bg-[#77797b]" />
    </div>
  </footer>
);

export default function App() {
  return (
    <div className="h-[1080px] w-[1920px] overflow-hidden font-['Open_Sans',sans-serif]">
      <TabStrip />
      <Toolbar />
      <Bookmarks />
      <Page />
      <Taskbar />
    </div>
  );
}
